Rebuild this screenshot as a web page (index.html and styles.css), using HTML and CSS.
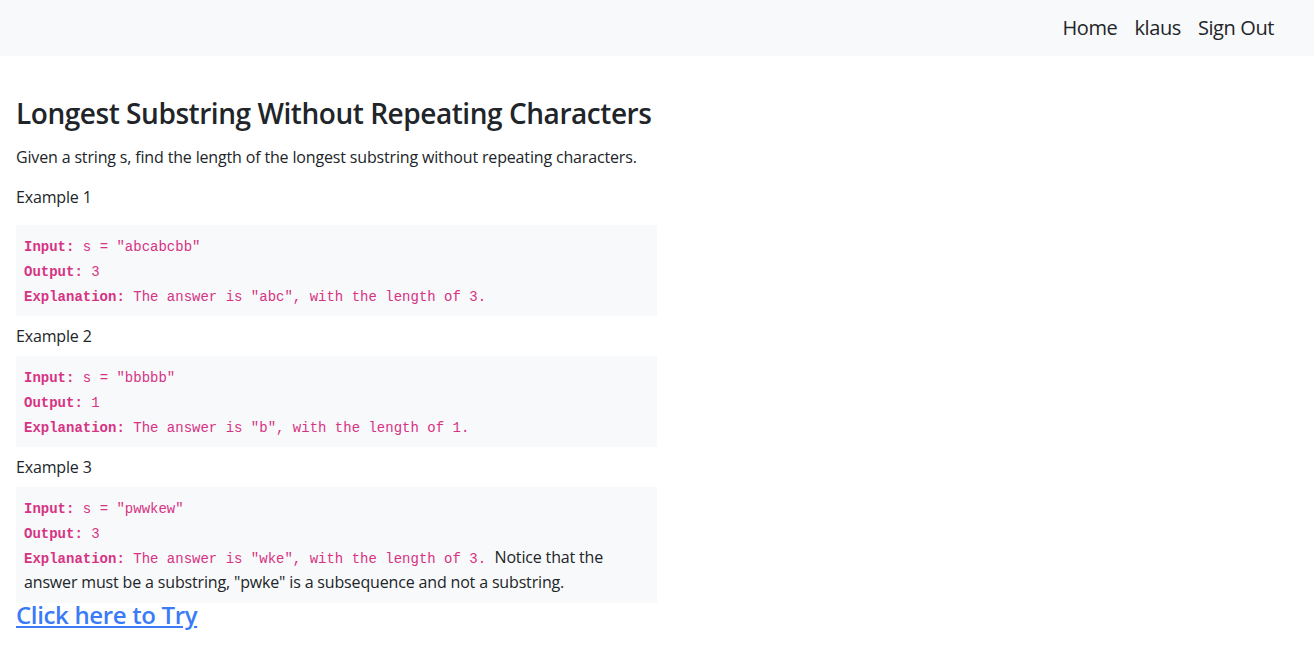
FILE: index.html
```html
<!DOCTYPE html>
<html lang="en">
<head>
<meta charset="utf-8">
<title>Longest Substring Without Repeating Characters</title>
<link rel="stylesheet" href="styles.css">
</head>
<body>
<nav class="navbar">
  <a class="nav-link" href="#">Home</a>
  <a class="nav-link" href="#">klaus</a>
  <a class="nav-link" href="#">Sign Out</a>
</nav>
<main class="problem">
  <h1 class="title">Longest Substring Without Repeating Characters</h1>
  <p class="desc">Given a string s, find the length of the longest substring without repeating characters.</p>

  <p class="example-label first">Example 1</p>
  <div class="example">
    <div class="line"><code><strong>Input:</strong> s = "abcabcbb"</code></div>
    <div class="line"><code><strong>Output:</strong> 3</code></div>
    <div class="line"><code><strong>Explanation:</strong> The answer is "abc", with the length of 3.</code></div>
  </div>

  <p class="example-label">Example 2</p>
  <div class="example">
    <div class="line"><code><strong>Input:</strong> s = "bbbbb"</code></div>
    <div class="line"><code><strong>Output:</strong> 1</code></div>
    <div class="line"><code><strong>Explanation:</strong> The answer is "b", with the length of 1.</code></div>
  </div>

  <p class="example-label">Example 3</p>
  <div class="example">
    <div class="line"><code><strong>Input:</strong> s = "pwwkew"</code></div>
    <div class="line"><code><strong>Output:</strong> 3</code></div>
    <div class="line"><code><strong>Explanation:</strong> The answer is "wke", with the length of 3. </code>Notice that the answer must be a substring, "pwke" is a subsequence and not a substring.</div>
  </div>

  <a class="try-link" href="#">Click here to Try</a>
</main>
</body>
</html>
```

FILE: styles.css
```css
* { box-sizing: border-box; }

body {
  margin: 0;
  font-family: "Open Sans", "Noto Sans", sans-serif;
  font-size: 16px;
  letter-spacing: -0.16px;
  line-height: 24px;
  color: #212529;
  background: #fff;
}

.navbar {
  height: 56px;
  background: #f8f9fa;
  display: flex;
  justify-content: flex-end;
  align-items: center;
  gap: 17px;
  padding-right: 40px;
}

.nav-link {
  font-size: 20px;
  letter-spacing: -0.4px;
  color: #212529;
  text-decoration: none;
}

.problem {
  width: 673px;
  padding: 40px 16px 0;
}

.title {
  font-size: 28px;
  font-weight: 600;
  letter-spacing: -0.45px;
  line-height: 34px;
  margin: 0 0 15px;
  white-space: nowrap;
}

.desc {
  margin: 0 0 16px;
}

.example-label {
  margin: 8px 0;
}

.example-label.first {
  margin: 0 0 16px;
}

.example {
  background: #f8f9fa;
  padding: 8px;
  line-height: 25px;
}

.line {
  min-height: 25px;
}

.example code {
  font-family: "Liberation Mono", monospace;
  font-size: 14px;
  letter-spacing: 0;
  line-height: 1;
  color: #d63384;
}

.example strong {
  font-weight: 700;
}

.try-link {
  display: inline-block;
  font-size: 24px;
  font-weight: 600;
  letter-spacing: -0.35px;
  line-height: 24px;
  color: #3a7bf7;
  text-decoration: underline;
}
```
